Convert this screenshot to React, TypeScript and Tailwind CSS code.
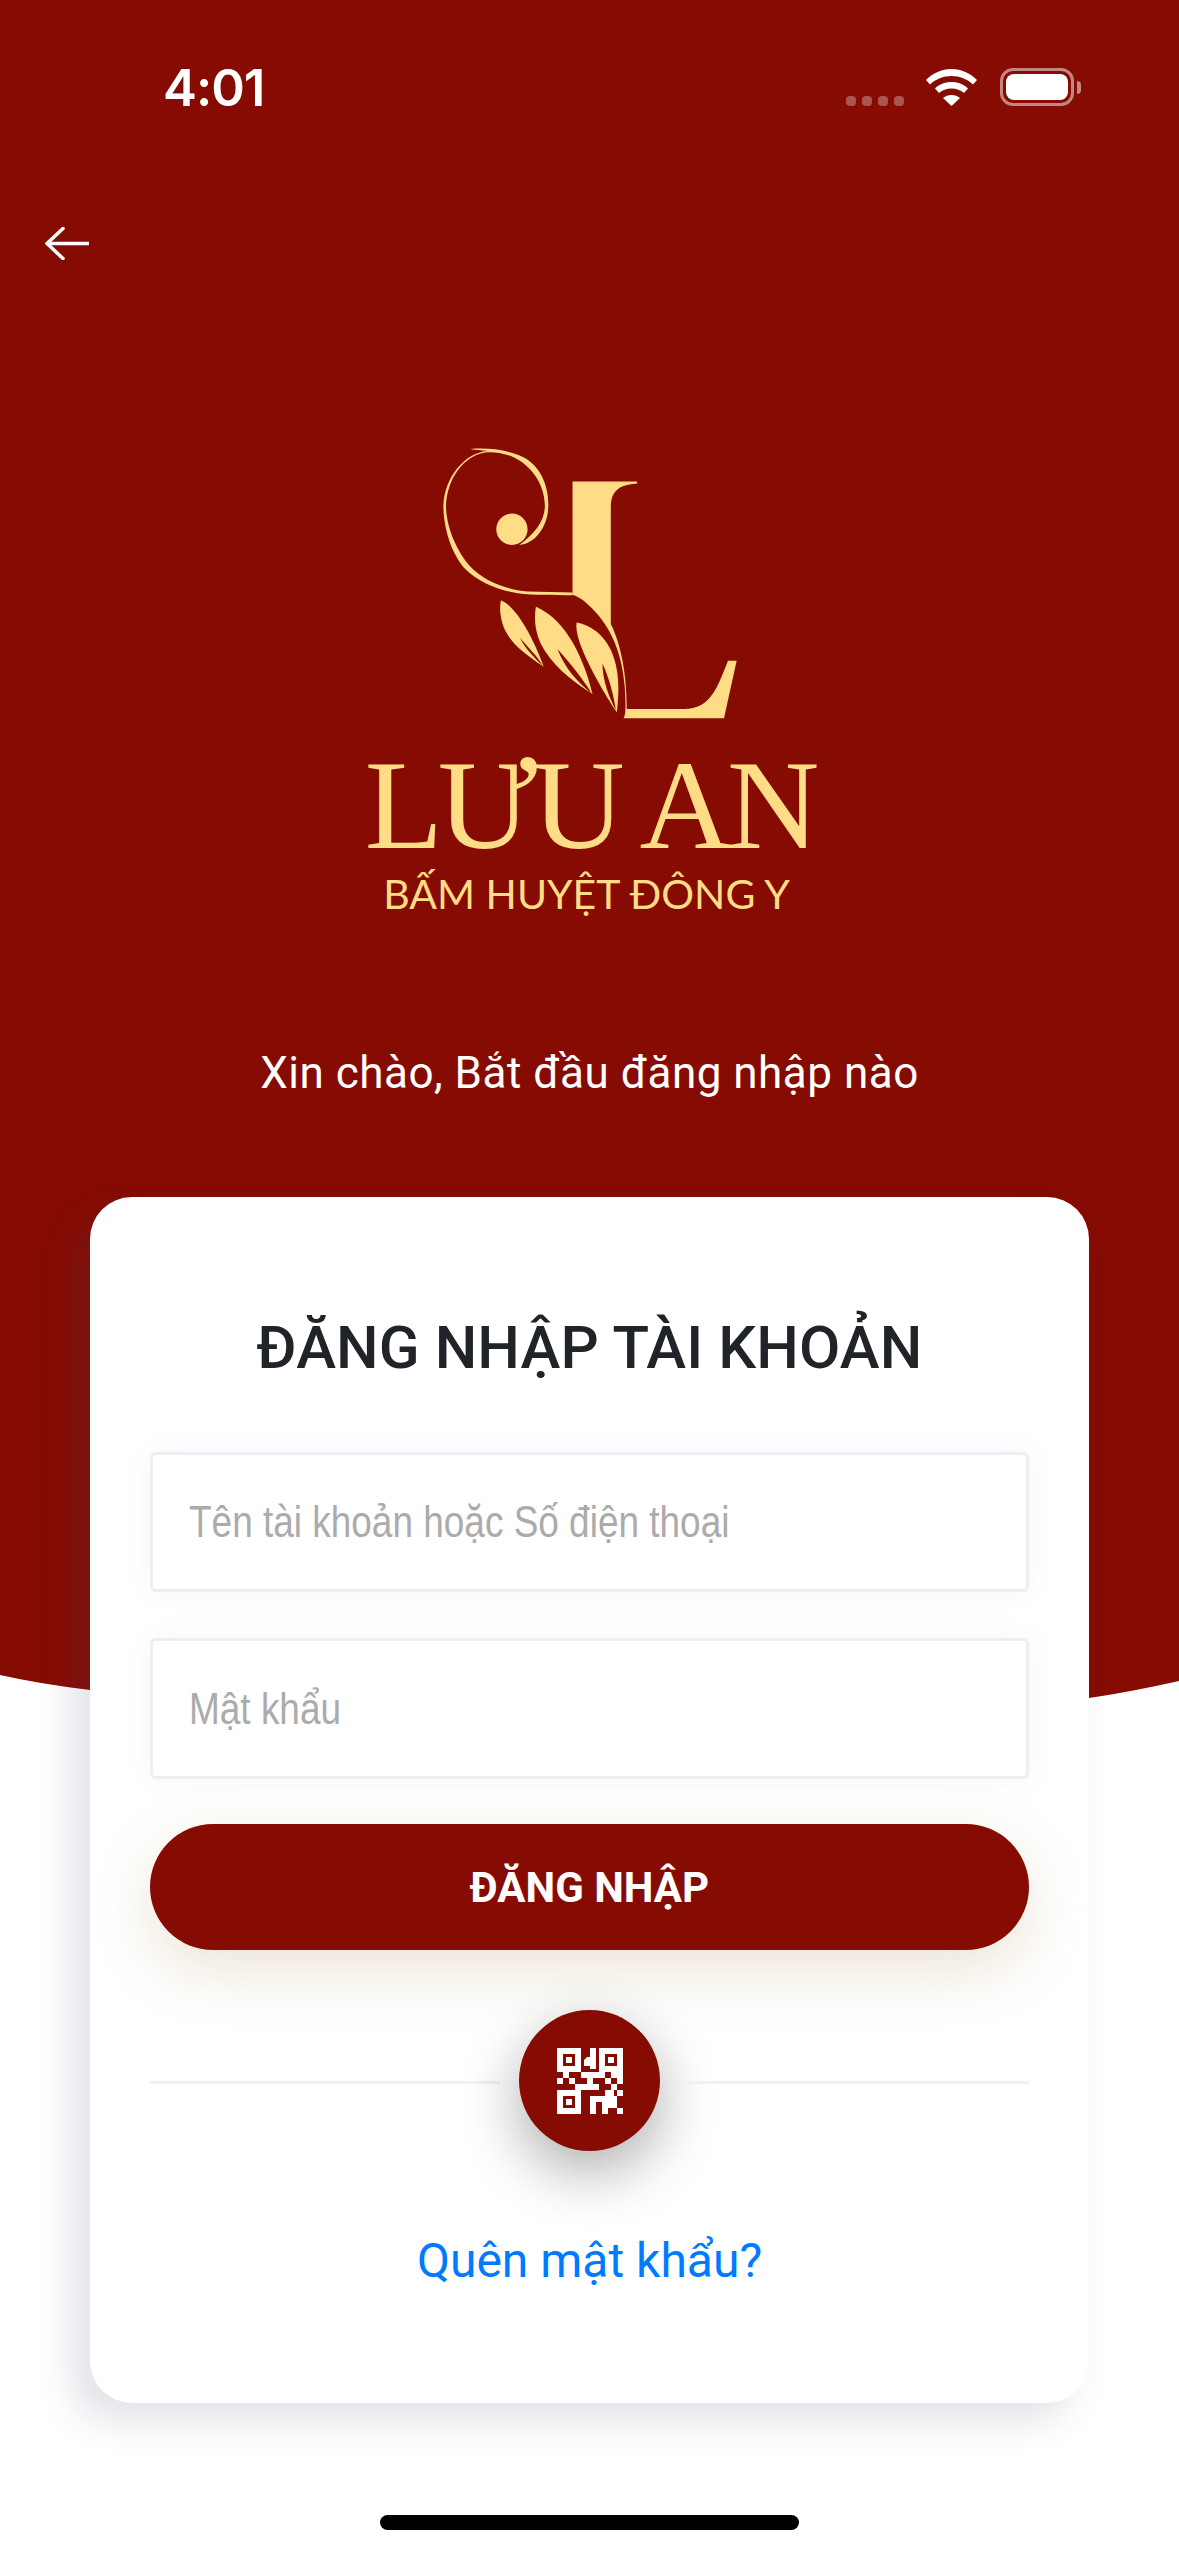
import React from 'react';

const red = '#860C03';
const gold = '#FFDC85';

// white parts of the qr icon, x y w h
const qrCells = [
  [9, 9, 6, 6], [51, 9, 6, 6], [9, 51, 6, 6],
  [6, 24, 6, 6], [24, 24, 24, 6], [54, 24, 12, 6],
  [0, 30, 6, 6], [12, 30, 6, 6], [30, 30, 6, 6], [48, 30, 6, 6], [60, 30, 6, 6],
  [18, 36, 24, 6], [54, 36, 6, 6],
  [48, 42, 9, 6], [60, 42, 6, 6],
  [33, 48, 21, 6], [33, 48, 6, 18], [54, 48, 6, 6],
  [48, 54, 12, 6], [45, 54, 6, 6],
  [45, 60, 6, 6], [60, 60, 6, 6],
];

const QrIcon = () => (
  <svg viewBox="0 0 66 66" className="w-[66px] h-[66px]" fill="#fff" shapeRendering="crispEdges">
    <path fillRule="evenodd" d="M0 0h24v24H0zM6 6v12h12V6zM42 0h24v24H42zM48 6v12h12V6zM0 42h24v24H0zM6 48v12h12V48z" />
    <path shapeRendering="auto" d="M33 0h6v21h-6v-3h-6v-6l3-3h3z" />
    {qrCells.map(([x, y, w, h]) => (
      <rect key={`${x}-${y}`} x={x} y={y} width={w} height={h} />
    ))}
  </svg>
);

const LogoMark = () => (
  <svg viewBox="360 78 895 820" className="w-[298px] h-[273px]" fill={gold}>
    <path d="M755 182H948L950 188C915 192 870 195 870 260V610C900 670 918 760 918 865H1090C1170 865 1190 800 1222 720H1248L1210 893H908C916 880 915 850 912 800C905 700 870 610 800 550C785 535 770 527 755 522Z" />
    <path d="M755 523C700 522 640 524 590 517C530 508 475 485 435 447C395 405 368 330 367 255C370 170 430 95 500 90C480 88 465 87 448 84C500 80 560 85 610 110C665 140 685 205 682 260C680 320 640 370 595 372C640 340 672 300 672 255C672 190 630 130 570 105C540 95 510 92 490 95C430 105 378 170 375 255C375 320 410 395 447 436C490 480 550 505 620 512L755 515Z" />
    <circle cx="573" cy="325" r="47" />
    <path d="M540 538C590 560 640 660 668 737C610 700 560 660 545 610C535 575 537 555 540 538Z" />
    <path d="M645 558C720 590 780 680 815 820C750 780 690 730 660 670C640 625 640 590 645 558Z" />
    <path d="M767 605C840 620 880 680 890 760C895 800 892 840 888 875C850 820 800 730 778 670C770 645 765 625 767 605Z" />
    <path fill={red} d="M597 650C620 680 650 705 665 735C640 710 610 680 597 650Z" />
    <path fill={red} d="M710 685C750 730 790 780 812 818C770 785 730 740 710 685Z" />
    <path fill={red} d="M845 728C865 770 880 830 885 868C865 830 845 780 845 728Z" />
  </svg>
);

const StatusBar = () => (
  <div className="flex items-start justify-between h-[120px] pt-[53px] pl-[163px] pr-[98px]">
    <span className="font-['Inter',sans-serif] font-semibold text-[51px] leading-[70px] tracking-[-1px] text-white">4:01</span>
    <div className="flex items-start mt-[15px]">
      <div className="flex gap-[6px] mt-[28px]">
        <span className="w-[10px] h-[10px] rounded-[4px] bg-white/30" />
        <span className="w-[10px] h-[10px] rounded-[4px] bg-white/30" />
        <span className="w-[10px] h-[10px] rounded-[4px] bg-white/30" />
        <span className="w-[10px] h-[10px] rounded-[4px] bg-white/30" />
      </div>
      <svg viewBox="0 0 51 37" className="w-[51px] h-[37px] ml-[22px] mt-[1px]" fill="#fff">
        <path d="M25.5 0C15.5 0 7 4 0 11l4 4.5C10 10 17 7 25.5 7S41 10 47 15.5l4-4.5C44 4 35.500 0 25.500 0z" />
        <path d="M25.500 13C18.500 13 13 15.500 9 19.500l4 4.500C16.500 21 20.500 19.500 25.500 19.500S34.500 21 38 24l4-4.500C38 15.500 32.500 13 25.500 13z" />
        <path d="M25.500 26C22 26 19.500 27 17 29l8.500 8 8.500-8C31.500 27 29 26 25.500 26z" />
      </svg>
      <div className="flex items-center ml-[23px]">
        <div className="w-[74px] h-[38px] rounded-[13px] border-[3px] border-white/50 p-[3px]">
          <div className="w-full h-full rounded-[8px] bg-white" />
        </div>
        <div className="w-[4px] h-[13px] rounded-r-full bg-white/50 ml-[3px]" />
      </div>
    </div>
  </div>
);

const Field: React.FC<{ label: string; className: string }> = ({ label, className }) => (
  <div className={`${className} rounded-[6px] border-[3px] border-[#EEEEEE] bg-white flex items-center pl-[36px] shadow-[0_0_30px_rgba(110,110,255,0.06)]`}>
    <span className="font-['Liberation_Sans',sans-serif] text-[44px] text-[#ABABAB] origin-left scale-x-[0.84] whitespace-nowrap">{label}</span>
  </div>
);

export default function App() {
  return (
    <div className="relative w-[1179px] h-[2556px] bg-white overflow-hidden font-['Roboto',sans-serif]">
      {/* red header behind the card */}
      <svg className="absolute left-0 top-0 w-[1179px] h-[1720px]" viewBox="0 0 1179 1720">
        <path d="M0 0H1179V1681Q1130 1692 1089 1698Q820 1730 590 1722Q300 1716 90 1690Q40 1684 0 1675Z" fill={red} />
      </svg>

      <div className="relative flex flex-col">
        <StatusBar />

        <div className="h-[150px] pl-[45px] pt-[107px]">
          <svg viewBox="0 0 45 33" className="w-[45px] h-[33px]" fill="none" stroke="#fff" strokeWidth="3.5" strokeLinecap="round" strokeLinejoin="miter">
            <path d="M44 16.500H2" strokeLinecap="butt" />
            <path d="M18 1.500L2 16.500L18 31.500" />
          </svg>
        </div>

        <div className="flex flex-col items-center mt-[177px]">
          <LogoMark />
          <span className="font-['Liberation_Serif',serif] text-[128px] leading-[100px] text-[#FFDC85] mt-[35px] tracking-[-5px]">LƯU AN</span>
          <span className="font-['Lato',sans-serif] text-[41px] leading-[50px] text-[#FFDC85] mt-[14px] mr-[6px]">BẤM HUYỆT ĐÔNG Y</span>
        </div>

        <p className="text-center text-white text-[44px] leading-[56px] mt-[126px] tracking-[0.5px]">Xin chào, Bắt đầu đăng nhập nào</p>

        <div className="mx-[90px] mt-[96px] h-[1206px] rounded-[42px] bg-white shadow-[-18px_18px_36px_rgba(60,70,100,0.15)] px-[60px] flex flex-col">
          <h1 className="text-center text-[#202428] font-medium text-[60px] leading-[70px] tracking-[0.1px] mt-[116px]">ĐĂNG NHẬP TÀI KHOẢN</h1>

          <Field label="Tên tài khoản hoặc Số điện thoại" className="mt-[69px] h-[140px]" />
          <Field label="Mật khẩu" className="mt-[46px] h-[141px]" />

          <button className="mt-[45px] h-[126px] rounded-full bg-[#860C03] text-white font-bold text-[42px] shadow-[0_20px_60px_rgba(170,130,70,0.22)]">ĐĂNG NHẬP</button>

          <div className="flex items-center mt-[60px]">
            <div className="flex-1 h-[3px] mt-[4px] bg-[#F1F1F3]" />
            <div className="mx-[19px] w-[141px] h-[141px] rounded-full bg-[#860C03] flex items-center justify-center shadow-[0_20px_60px_rgba(0,0,0,0.33)]">
              <QrIcon />
            </div>
            <div className="flex-1 h-[3px] mt-[4px] bg-[#F1F1F3]" />
          </div>

          <a className="text-center text-[#007AFF] text-[48px] leading-[60px] mt-[80px]">Quên mật khẩu?</a>
        </div>

        <div className="flex justify-center mt-[112px]">
          <div className="w-[419px] h-[15px] rounded-full bg-black" />
        </div>
      </div>
    </div>
  );
}
